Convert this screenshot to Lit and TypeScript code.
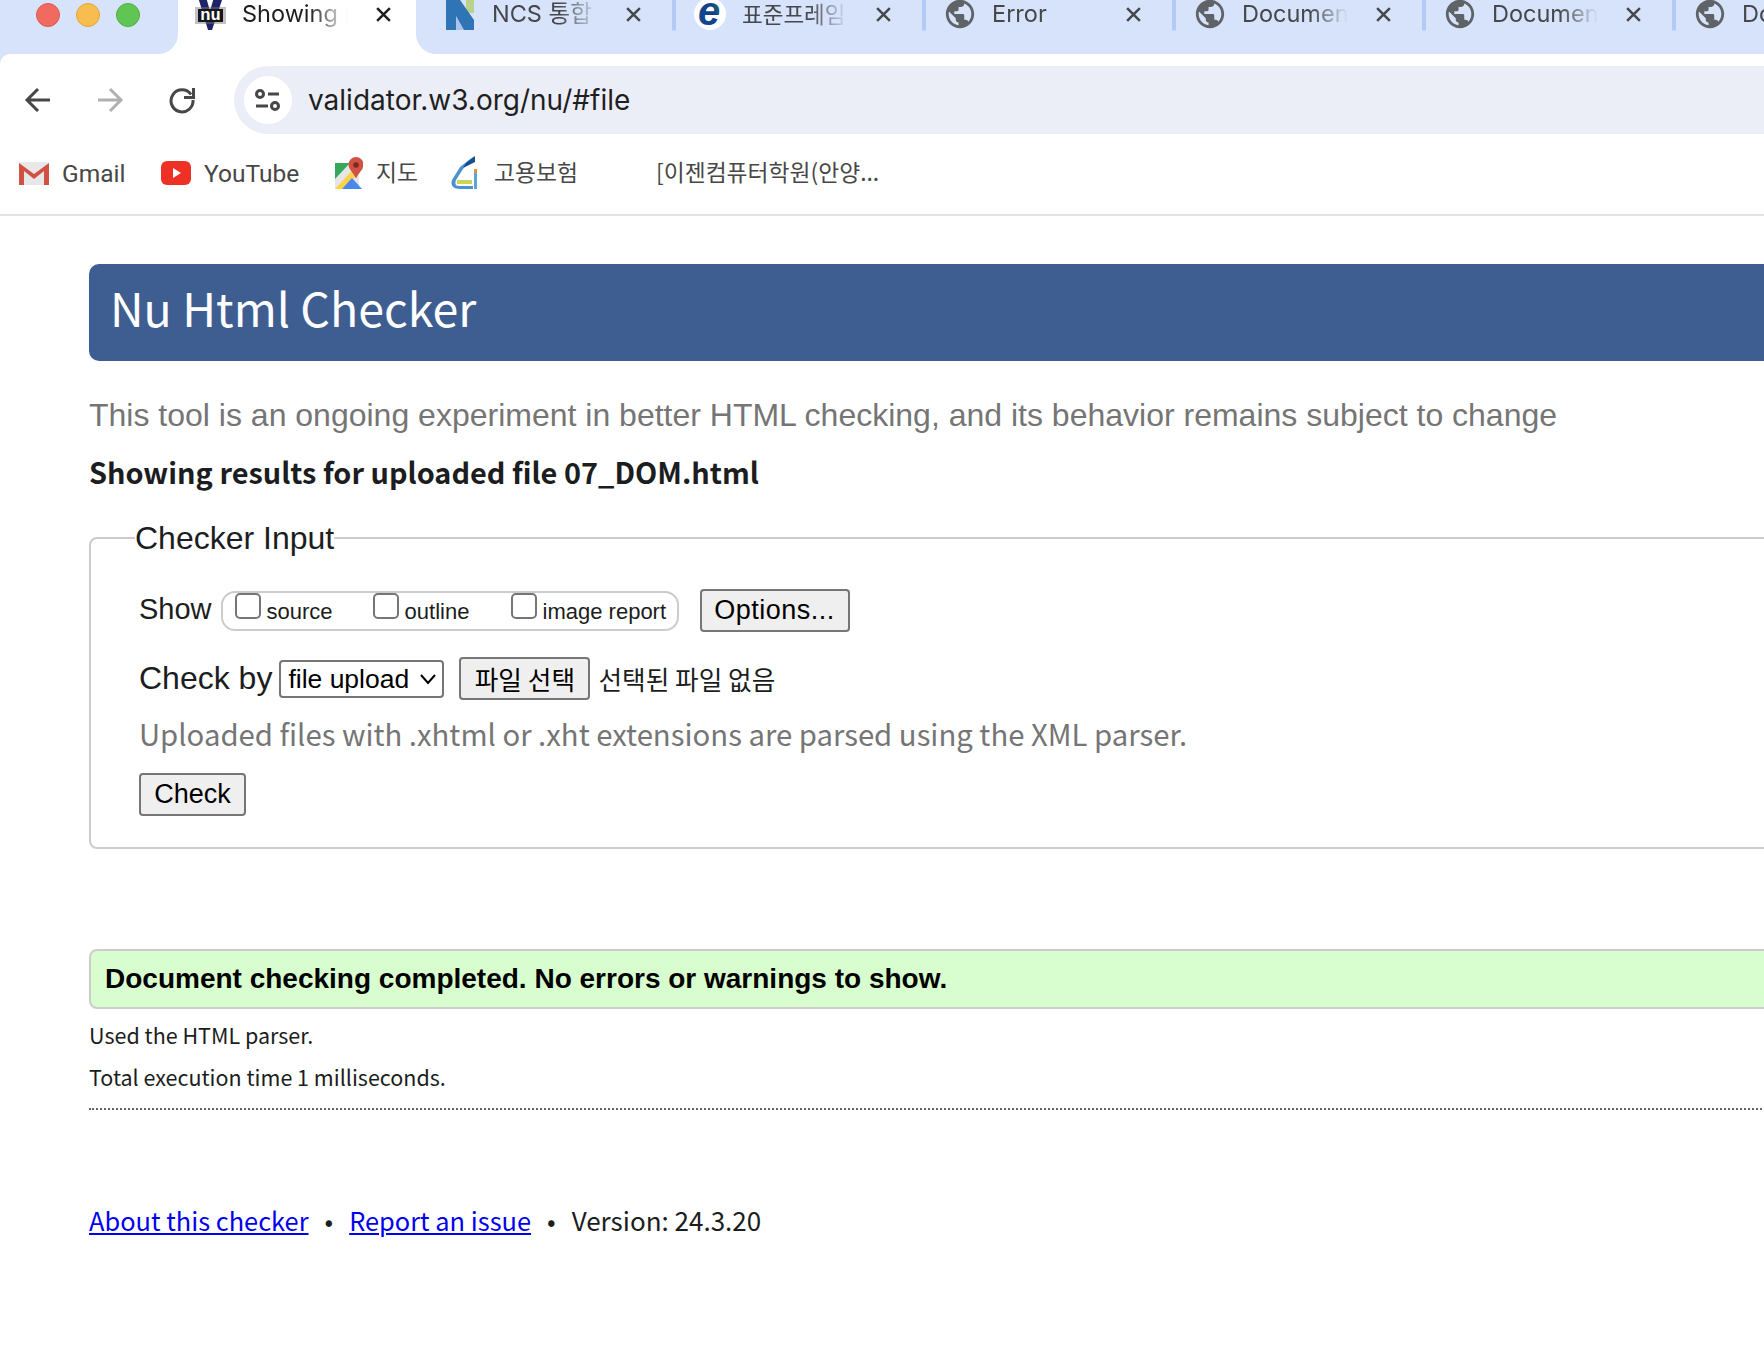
import { LitElement, html, css } from "lit";
import { customElement } from "lit/decorators.js";

const globe = html`<svg class="fav globe" viewBox="0 0 24 24"><path fill="#5f6368" d="M12 2C6.48 2 2 6.48 2 12s4.48 10 10 10 10-4.48 10-10S17.52 2 12 2zm-1 17.93c-3.95-.49-7-3.85-7-7.93 0-.62.08-1.21.21-1.79L9 15v1c0 1.1.9 2 2 2v1.93zm6.9-2.54c-.26-.81-1-1.39-1.9-1.39h-1v-3c0-.55-.45-1-1-1H8v-2h2c.55 0 1-.45 1-1V7h2c1.1 0 2-.9 2-2v-.41c2.93 1.19 5 4.06 5 7.41 0 2.08-.8 3.97-2.1 5.39z"/></svg>`;

const nuIcon = html`<svg class="fav" viewBox="0 0 34 34">
  <path fill="#1f2468" d="M5 0h8l4 14 4-14h9L19 33h-4z"/>
  <rect x="2" y="10" width="31" height="17" fill="#777" opacity=".45"/>
  <rect x="5" y="12" width="25" height="13" fill="#16161c"/>
  <text x="17.500" y="23" text-anchor="middle" font-family="Liberation Mono, monospace" font-weight="700" font-size="17" fill="#fff">nu</text>
</svg>`;

const ncsIcon = html`<svg class="fav" viewBox="0 0 34 34">
  <rect x="23" y="0" width="8" height="16" fill="#b9d48a"/>
  <path fill="#a9c6ea" d="M13 19l8 14h-8z"/>
  <path fill="#2f75b5" d="M3 0h12l16 23v10H21L13 19v14H3z"/>
</svg>`;

const eIcon = html`<svg class="fav" viewBox="0 0 34 34">
  <defs><linearGradient id="eg" x1="0" y1="1" x2="1" y2="0"><stop offset="0" stop-color="#0f4f96"/><stop offset=".6" stop-color="#123f86"/><stop offset="1" stop-color="#39a04a"/></linearGradient></defs>
  <circle cx="17" cy="17" r="16" fill="#fff"/>
  <text x="16" y="28" text-anchor="middle" font-family="Liberation Sans, sans-serif" font-style="italic" font-weight="700" font-size="40" fill="url(#eg)">e</text>
</svg>`;

const tabs = [
  { icon: ncsIcon, title: "NCS 통합 검색", sep: false, kr: false },
  { icon: eIcon, title: "표준프레임워크", sep: true, kr: true },
  { icon: globe, title: "Error", sep: true, kr: false },
  { icon: globe, title: "Document", sep: true, kr: false },
  { icon: globe, title: "Document", sep: true, kr: false },
  { icon: globe, title: "Document", sep: true, kr: false },
];

const closeIcon = html`<svg class="close" viewBox="0 0 16 16"><path d="M2 2l12 12M14 2L2 14" stroke="currentColor" stroke-width="2.4" fill="none"/></svg>`;

@customElement("app-root")
export class AppRoot extends LitElement {
  static styles = css`
    :host { display: block; width: 100%; height: 1370px; overflow: hidden; background: #fff; font-family: "Noto Sans CJK KR", sans-serif; color: #1b1d20; }
    .strip { display: flex; height: 54px; background: #fff; overflow: hidden; }
    .lights { flex: 0 0 178px; box-sizing: border-box; background: #d6e3fb; border-bottom-right-radius: 20px; display: flex; gap: 16px; padding: 3px 0 0 36px; }
    .light { width: 24px; height: 24px; border-radius: 50%; box-sizing: border-box; }
    .red { background: #f16a60; border: 1px solid #dc5a50; }
    .yellow { background: #f7bd4f; border: 1px solid #e0a63d; }
    .green { background: #61c554; border: 1px solid #50ad45; }
    .active-tab { flex: 0 0 238px; display: flex; align-items: flex-start; }
    .rest { flex: 1; display: flex; background: #d6e3fb; border-bottom-left-radius: 20px; overflow: hidden; }
    .tab { position: relative; flex: 0 0 250px; height: 54px; box-sizing: border-box; display: flex; align-items: flex-start; color: #45474a; }
    .tab.first { flex-basis: 256px; padding-left: 6px; }
    .tab.sep::before { content: ""; position: absolute; left: 0; top: 0; width: 4px; height: 31px; background: #b3caf5; border-radius: 0 0 2px 2px; }
    .tabinner { display: flex; align-items: center; height: 28px; width: 100%; }
    .active-tab .tabinner { color: #1f1f1f; margin-left: -6px; }
    .favbox { width: 34px; height: 34px; margin: -3px 0 -3px 21px; flex: none; }
    .fav { width: 34px; height: 34px; display: block; overflow: visible; }
    .ttl { width: 106px; margin-left: 15px; white-space: nowrap; overflow: hidden; font-family: Inter, "Noto Sans CJK KR", sans-serif; font-size: 23.5px; line-height: 28px; -webkit-mask-image: linear-gradient(90deg, #000 64%, transparent 100%); mask-image: linear-gradient(90deg, #000 64%, transparent 100%); }
    .ttl.kr { font-family: "Noto Sans CJK KR", sans-serif; font-size: 22.5px; padding-bottom: 3px; }
    .close { width: 17px; height: 17px; margin-left: 27px; flex: none; }
    .toolwrap { background: #d6e3fb; }
    .toolbar { background: #fff; border-top-left-radius: 10px; height: 80px; display: flex; align-items: center; box-sizing: border-box; padding: 12px 0 0 24px; }
    .nav { width: 28px; height: 28px; flex: none; margin-right: 44px; }
    .addr { flex: 1; height: 68px; margin-left: -6px; background: #ebeef7; border-radius: 34px 0 0 34px; display: flex; align-items: center; padding-left: 10px; }
    .tune { width: 48px; height: 48px; border-radius: 50%; background: #fff; display: flex; align-items: center; justify-content: center; flex: none; }
    .tune svg { width: 26px; height: 26px; }
    .url { margin-left: 16px; font-family: Inter, sans-serif; font-size: 28px; color: #1f1f1f; }
    .bookmarks { height: 82px; box-sizing: border-box; border-bottom: 2px solid #e1e3e1; display: flex; align-items: center; padding: 0 0 2px 19px; font-family: Roboto, "Noto Sans CJK KR", sans-serif; font-size: 24.5px; color: #474747; }
    .bm { display: flex; align-items: center; }
    .bm svg { display: block; flex: none; }
    .bm span { margin-left: 13px; }
    .bm .kr { font-family: "Noto Sans CJK KR", sans-serif; font-size: 22.8px; padding-bottom: 4px; }
    .bm .gap { margin-left: 16px; }
    .bm .bare { margin-left: 0; }
    .w1 { width: 142px; }
    .w2 { width: 174px; }
    .w3 { width: 115px; }
    .w4 { width: 206px; }
    .page { width: 2200px; box-sizing: border-box; margin-left: 89px; padding-top: 48px; }
    h1 { margin: 0; height: 97px; box-sizing: border-box; background: #3e5e92; border-radius: 10px; color: #fff; font-weight: 400; font-size: 46.5px; line-height: 86px; padding-left: 21px; }
    .tag { margin: 35px 0 0; font-family: "Liberation Sans", sans-serif; font-size: 32px; line-height: 38px; color: #757575; }
    .showing { margin: 14px 0 0; font-size: 28.9px; line-height: 46px; font-weight: 700; color: #1b1d20; }
    fieldset { margin: 24px 0 0; padding: 0 0 0 48px; height: 331px; box-sizing: border-box; border: 2px solid #ccc; border-radius: 8px; min-width: 0; }
    legend { font-family: "Liberation Sans", sans-serif; font-size: 32px; line-height: 40px; padding: 0; margin-left: -4px; color: #1b1d20; }
    fieldset .row:first-of-type { margin-top: 31px; }
    .row { display: flex; align-items: center; font-family: "Liberation Sans", sans-serif; }
    .lab { font-size: 29px; padding-bottom: 3px; }
    .showbox { margin-left: 9px; width: 458px; height: 40px; box-sizing: border-box; border: 2px solid #ccc; border-radius: 14px; display: flex; align-items: flex-start; padding-left: 12px; font-size: 22px; }
    .opt { display: flex; align-items: flex-start; width: 138px; flex: none; }
    .opt input { appearance: none; margin: 0; width: 26px; height: 26px; border: 2px solid #767676; border-radius: 5px; background: #fff; flex: none; box-sizing: border-box; }
    .opt span { margin: 4px 0 0 6px; line-height: 30px; white-space: nowrap; }
    button { font-family: "Liberation Sans", sans-serif; font-size: 27px; color: #000; background: #efefef; border: 2px solid #767676; border-radius: 4px; padding: 0; box-sizing: border-box; }
    .options { margin-left: 21px; width: 150px; height: 43px; letter-spacing: .5px; }
    .row.by { margin-top: 25px; }
    .by .lab { font-size: 32px; padding-bottom: 0; }
    select { appearance: none; margin-left: 7px; width: 165px; height: 38px; box-sizing: border-box; border: 2px solid #767676; border-radius: 4px; background: #fff; font-family: "Liberation Sans", sans-serif; font-size: 26.5px; color: #000; padding: 0 0 0 7px; outline: none; }
    .selwrap { position: relative; display: flex; }
    .selwrap svg { position: absolute; right: 8px; top: 13px; width: 16px; height: 12px; pointer-events: none; }
    .file { margin-left: 15px; width: 131px; height: 43px; font-family: "Noto Sans CJK KR", sans-serif; font-size: 25.7px; line-height: 1; }
    .none { margin-left: 8px; font-family: "Noto Sans CJK KR", sans-serif; font-size: 25.7px; color: #1b1d20; }
    .hint { margin: 11px 0 0; font-size: 29.3px; line-height: 44px; color: #757575; }
    .check { display: block; margin-top: 18px; width: 107px; height: 43px; }
    .ok { margin: 100px 0 0; height: 60px; box-sizing: border-box; border: 2px solid #ccc; border-radius: 8px; background: #d8fdcf; font-family: "Liberation Sans", sans-serif; font-weight: 700; font-size: 28px; line-height: 56px; padding-left: 14px; color: #000; }
    .meta { margin: 0; font-size: 21.5px; line-height: 34px; }
    .meta.a { margin-top: 9px; }
    .meta.b { margin-top: 8px; }
    .rule { margin: 14px 0 0; height: 0; border-top: 2px dotted #666; }
    .foot { margin: 90px 0 0; font-size: 25.4px; line-height: 40px; display: flex; align-items: center; white-space: nowrap; }
    .foot a { color: #0000ee; text-decoration: underline; }
    .dot { margin: 0 16px; }
    .ver { font-size: 26px; }
  `;

  render() {
    const tab = (t: (typeof tabs)[number]) => html`
      <div class="tab ${t.sep ? "sep" : "first"}">
        <div class="tabinner">
          <div class="favbox">${t.icon}</div>
          <div class="ttl ${t.kr ? "kr" : ""}">${t.title}</div>
          ${closeIcon}
        </div>
      </div>`;
    return html`
      <div class="strip">
        <div class="lights"><div class="light red"></div><div class="light yellow"></div><div class="light green"></div></div>
        <div class="active-tab">
          <div class="tabinner">
            <div class="favbox">${nuIcon}</div>
            <div class="ttl">Showing results</div>
            ${closeIcon}
          </div>
        </div>
        <div class="rest">${tabs.map(tab)}</div>
      </div>
      <div class="toolwrap"><div class="toolbar">
        <svg class="nav" viewBox="0 0 28 28"><path d="M26 14H4M14 3L3 14l11 11" fill="none" stroke="#474747" stroke-width="3"/></svg>
        <svg class="nav" viewBox="0 0 28 28"><path d="M2 14h22M14 3l11 11-11 11" fill="none" stroke="#b0b0b0" stroke-width="3"/></svg>
        <svg class="nav" viewBox="0 0 28 28"><path d="M23 8.500A11 11 0 1 0 25 14" fill="none" stroke="#474747" stroke-width="3"/><path d="M25.500 2v9.500H16" fill="none" stroke="#474747" stroke-width="3"/></svg>
        <div class="addr">
          <div class="tune"><svg viewBox="0 0 26 26"><circle cx="5" cy="7" r="3.500" fill="none" stroke="#474747" stroke-width="3"/><path d="M13 7h11M1 19h12" stroke="#474747" stroke-width="3"/><circle cx="20" cy="19" r="3.500" fill="none" stroke="#474747" stroke-width="3"/></svg></div>
          <div class="url">validator.w3.org/nu/#file</div>
        </div>
      </div></div>
      <div class="bookmarks">
        <div class="bm w1">
          <svg width="30" height="24" viewBox="0 0 30 24"><rect x="0" y="1" width="30" height="23" rx="2" fill="#e8e8e8"/><path d="M0 24V2l15 11L30 2v22h-5V10L15 18 5 10v14z" fill="#cf5245"/></svg>
          <span>Gmail</span>
        </div>
        <div class="bm w2">
          <svg width="30" height="24" viewBox="0 0 30 24"><rect width="30" height="24" rx="6" fill="#ee3124"/><path d="M12 7l8 5-8 5z" fill="#fff"/></svg>
          <span>YouTube</span>
        </div>
        <div class="bm w3">
          <svg width="28" height="32" viewBox="0 0 28 32"><path d="M0 6h24v26H0z" fill="#e6e6e6"/><path d="M0 6h15L0 22z" fill="#35a85a"/><path d="M0 32l24-26 4 6-21 20z" fill="#fbd34a"/><path d="M7 32l10-11 10 11z" fill="#4a88ea"/><path d="M21 0a7.500 7.500 0 0 1 7.500 7.500c0 5-5 8-7.500 14-2.500-6-7.500-9-7.500-14A7.500 7.500 0 0 1 21 0z" fill="#cf5245"/><circle cx="21" cy="8" r="2.800" fill="#7a2a20"/></svg>
          <span class="kr">지도</span>
        </div>
        <div class="bm w4">
          <svg width="28" height="34" viewBox="0 0 28 34"><path d="M24 0L10 11 2 24c-2 6 2 9 8 9h13v-3H9c-4 0-4-3-3-6l7-11z" fill="#4a93cf"/><path d="M25 0l-9 7-3 5 12-6z" fill="#14508f"/><path d="M7 24h15v4H7z" fill="#c9d65a"/><path d="M24 17h3v16h-3z" fill="#5aa6dc"/><path d="M24 13h3v4h-3z" fill="#e4913f"/></svg>
          <span class="kr gap">고용보험</span>
        </div>
        <div class="bm"><span class="kr bare">[이젠컴퓨터학원(안양...</span></div>
      </div>
      <div class="page">
        <h1>Nu Html Checker</h1>
        <p class="tag">This tool is an ongoing experiment in better HTML checking, and its behavior remains subject to change</p>
        <p class="showing">Showing results for uploaded file 07_DOM.html</p>
        <fieldset>
          <legend>Checker Input</legend>
          <div class="row">
            <span class="lab">Show</span>
            <div class="showbox">
              <label class="opt"><input type="checkbox" /><span>source</span></label>
              <label class="opt"><input type="checkbox" /><span>outline</span></label>
              <label class="opt"><input type="checkbox" /><span>image report</span></label>
            </div>
            <button class="options">Options...</button>
          </div>
          <div class="row by">
            <span class="lab">Check by</span>
            <div class="selwrap">
              <select><option>file upload</option></select>
              <svg viewBox="0 0 16 12"><path d="M1 2l7 8 7-8" fill="none" stroke="#000" stroke-width="2"/></svg>
            </div>
            <button class="file">파일 선택</button>
            <span class="none">선택된 파일 없음</span>
          </div>
          <p class="hint">Uploaded files with .xhtml or .xht extensions are parsed using the XML parser.</p>
          <button class="check">Check</button>
        </fieldset>
        <div class="ok">Document checking completed. No errors or warnings to show.</div>
        <p class="meta a">Used the HTML parser.</p>
        <p class="meta b">Total execution time 1 milliseconds.</p>
        <div class="rule"></div>
        <div class="foot"><a href="#">About this checker</a><span class="dot">•</span><a href="#">Report an issue</a><span class="dot">•</span><span class="ver">Version: 24.3.20</span></div>
      </div>
    `;
  }
}
